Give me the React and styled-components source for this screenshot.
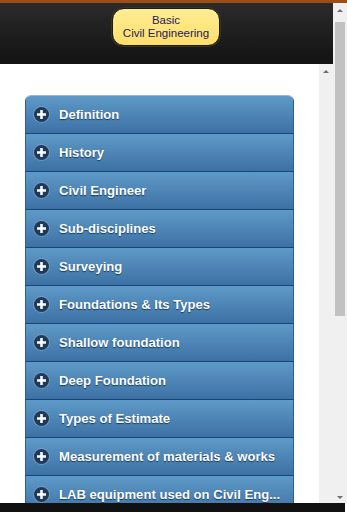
import React from "react";
import styled, { createGlobalStyle } from "styled-components";

const GlobalStyle = createGlobalStyle`
  html, body {
    margin: 0;
    padding: 0;
    background: #fff;
    overflow: hidden;
  }
  body {
    font-family: "Liberation Sans", Arial, sans-serif;
  }
`;

const Screen = styled.div`
  width: 347px;
  height: 512px;
  display: flex;
  flex-direction: column;
  overflow: hidden;
  background: #fff;
`;

const TopStripe = styled.div`
  height: 3px;
  flex: none;
  background: #9c4e16;
`;

const Body = styled.div`
  flex: 1;
  display: flex;
  min-height: 0;
`;

const MainColumn = styled.div`
  width: 333px;
  display: flex;
  flex-direction: column;
`;

const Header = styled.header`
  height: 61px;
  flex: none;
  display: flex;
  justify-content: center;
  align-items: flex-start;
  padding: 5px 1px 0 0;
  box-sizing: border-box;
  background: linear-gradient(#2b2b2b, #121212);
`;

const TitleButton = styled.div`
  width: 108px;
  height: 38px;
  box-sizing: border-box;
  border: 1px solid #1b1b1b;
  border-radius: 12px;
  background: linear-gradient(#ffed94, #fdde6a);
  box-shadow: 0 0 0 1px #3a3420;
  color: #24205a;
  font-size: 11.5px;
  line-height: 13px;
  text-align: center;
  display: flex;
  flex-direction: column;
  justify-content: center;
`;

const ContentRow = styled.div`
  flex: 1;
  display: flex;
  min-height: 0;
`;

const Content = styled.div`
  flex: 1;
  padding: 31px 0 0 25px;
  overflow: hidden;
`;

const Menu = styled.ul`
  list-style: none;
  margin: 0;
  padding: 0;
  width: 269px;
  border-radius: 6px 6px 0 0;
  border-top: 1px solid #9fb4c8;
  overflow: hidden;
`;

const Item = styled.li`
  height: 38px;
  box-sizing: border-box;
  display: flex;
  align-items: center;
  gap: 10px;
  padding: 0 0 1px 8px;
  border-left: 1px solid #2f5f8f;
  border-right: 1px solid #2f5f8f;
  border-bottom: 1px solid #174577;
  background: linear-gradient(#5e9ac7, #3d71a5);
  color: #fff;
  font-size: 13.1px;
  font-weight: bold;
  text-shadow: 0 1px 1px #173a5e;
  white-space: nowrap;
`;

const PlusIcon = styled.span`
  width: 15px;
  height: 15px;
  flex: none;
  border-radius: 50%;
  background: #1f3a58;
  box-shadow: 0 0 0 1px rgba(140, 175, 210, 0.5);
  display: flex;
  align-items: center;
  justify-content: center;
`;

const Scrollbar = styled.div`
  width: 14px;
  flex: none;
  background: #f0f0f0;
  display: flex;
  flex-direction: column;
  align-items: center;
  padding-top: 6px;
  box-sizing: border-box;
`;

const Arrow = styled.div`
  width: 0;
  height: 0;
  border-left: 3px solid transparent;
  border-right: 3px solid transparent;
  border-bottom: ${(p) => (p.down ? "none" : "3px solid #6e6e6e")};
  border-top: ${(p) => (p.down ? "3px solid #6e6e6e" : "none")};
`;

const Thumb = styled.div`
  width: 10px;
  height: 294px;
  margin-top: 10px;
  background: #c1c1c1;
`;

const OuterScrollbar = styled(Scrollbar)`
  padding-bottom: 4px;
`;

const Spacer = styled.div`
  flex: 1;
`;

const BottomBar = styled.div`
  height: 9px;
  flex: none;
  background: #111;
  margin-right: 2px;
`;

const items = [
  "Definition",
  "History",
  "Civil Engineer",
  "Sub-disciplines",
  "Surveying",
  "Foundations & Its Types",
  "Shallow foundation",
  "Deep Foundation",
  "Types of Estimate",
  "Measurement of materials & works",
  "LAB equipment used on Civil Eng...",
];

function Plus() {
  return (
    <PlusIcon>
      <svg width="9" height="9" viewBox="0 0 9 9">
        <rect x="3.25" y="0" width="2.5" height="9" fill="#fff" />
        <rect x="0" y="3.25" width="9" height="2.5" fill="#fff" />
      </svg>
    </PlusIcon>
  );
}

export default function App() {
  return (
    <>
      <GlobalStyle />
      <Screen>
        <TopStripe />
        <Body>
          <MainColumn>
            <Header>
              <TitleButton>
                <span>Basic</span>
                <span>Civil Engineering</span>
              </TitleButton>
            </Header>
            <ContentRow>
              <Content>
                <Menu>
                  {items.map((label) => (
                    <Item key={label}>
                      <Plus />
                      <span>{label}</span>
                    </Item>
                  ))}
                </Menu>
              </Content>
              <Scrollbar>
                <Arrow />
              </Scrollbar>
            </ContentRow>
          </MainColumn>
          <OuterScrollbar>
            <Arrow />
            <Thumb />
            <Spacer />
            <Arrow down />
          </OuterScrollbar>
        </Body>
        <BottomBar />
      </Screen>
    </>
  );
}
